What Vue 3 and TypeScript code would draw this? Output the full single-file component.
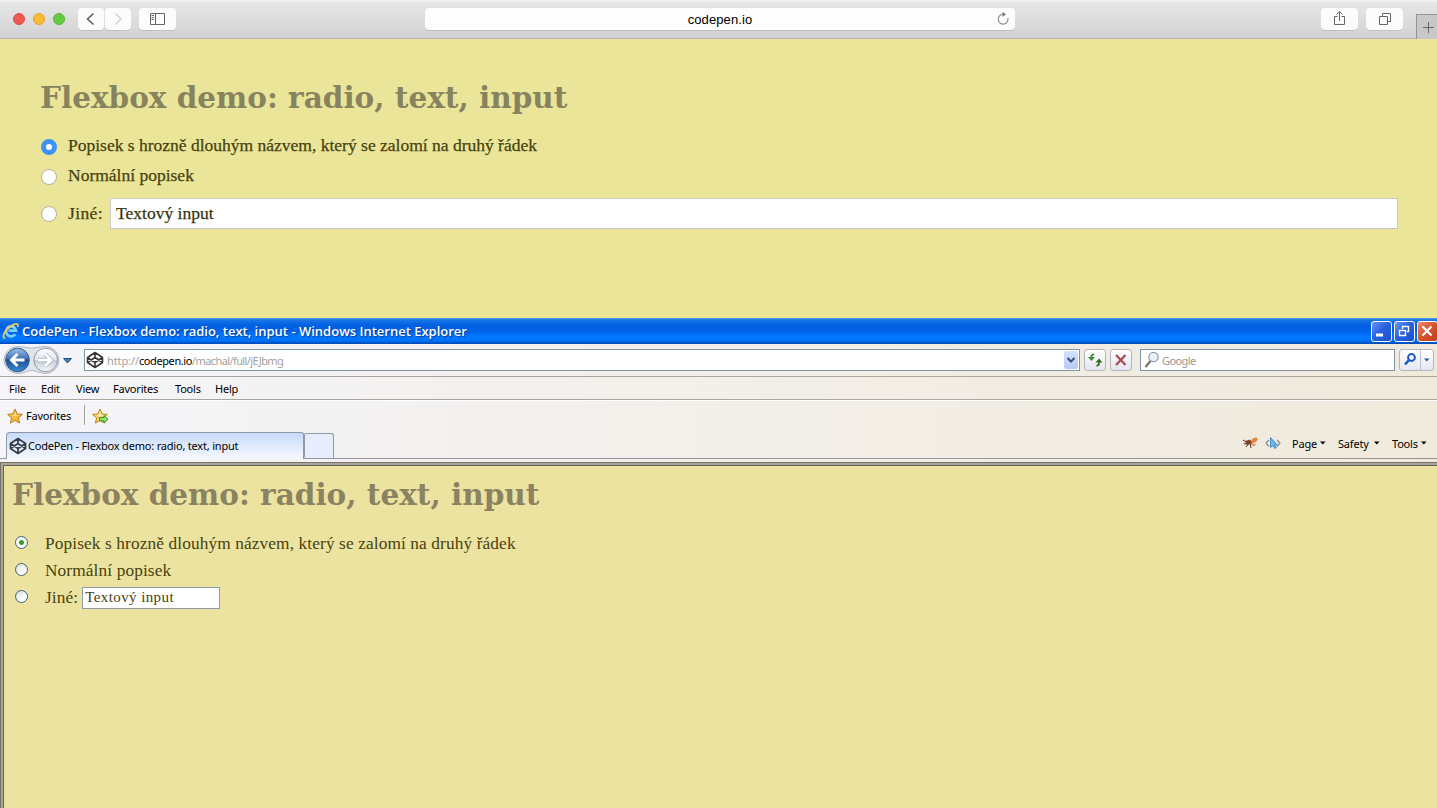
<script setup lang="ts">
import { ref } from 'vue'

interface Choice {
  id: string
  label: string
}

const title = 'Flexbox demo: radio, text, input'
const choices: Choice[] = [
  { id: 'long', label: 'Popisek s hrozně dlouhým názvem, který se zalomí na druhý řádek' },
  { id: 'normal', label: 'Normální popisek' },
  { id: 'other', label: 'Jiné:' },
]
const safariChoice = ref('long')
const ieChoice = ref('long')
const safariText = ref('Textový input')
const ieText = ref('Textový input')
const menu: string[] = ['File', 'Edit', 'View', 'Favorites', 'Tools', 'Help']
const commands: string[] = ['Page', 'Safety', 'Tools']
</script>

<template>
  <div class="screen">
    <section class="safari">
      <header class="bar">
        <i class="light red"></i><i class="light amber"></i><i class="light green"></i>
        <button class="sbtn back"><svg width="26" height="22" viewBox="0 0 26 22"><path d="M15.500 5.500 9.500 11l6 5.500" fill="none" stroke="#5b5b5b" stroke-width="1.500" /></svg></button>
        <button class="sbtn fwd"><svg width="26" height="22" viewBox="0 0 26 22"><path d="M10.500 5.500 16 11l-5.500 5.500" fill="none" stroke="#cfcfcf" stroke-width="1.400" /></svg></button>
        <button class="sbtn side"><svg width="37" height="22" viewBox="0 0 37 22"><path d="M11.500 5.500h14v11h-14zM16.500 5.500v11M12.500 7.500h2.500M12.500 9.500h2.500M12.500 11.500h2.500" fill="none" stroke="#666" /></svg></button>
        <div class="url">
          <span>codepen.io</span>
          <svg class="reload" width="14" height="16" viewBox="0 0 14 16"><path d="M6.800 4.300a4.900 4.900 0 1 0 5 3.500" fill="none" stroke="#8a8a8a" stroke-width="1.100" /><path d="M6.500 1.800v5L10 4.400z" fill="#777" /></svg>
        </div>
        <button class="sbtn share"><svg width="37" height="22" viewBox="0 0 37 22"><path d="M16.500 8.500h-3v8h10v-8h-3M18.500 13V4M15.500 6.500l3-3 3 3" fill="none" stroke="#666" /></svg></button>
        <button class="sbtn tabs"><svg width="37" height="22" viewBox="0 0 37 22"><path d="M13.500 8.500h8v8h-8zM16.500 8V5.500h8v8H22" fill="none" stroke="#666" /></svg></button>
        <button class="plus"><svg width="21" height="24" viewBox="0 0 21 24"><path d="M6 12.500h11M11.500 7v11" fill="none" stroke="#666" /></svg></button>
      </header>
      <main class="demo">
        <h1>{{ title }}</h1>
        <div v-for="c in choices" :key="c.id" class="row" :class="c.id">
          <button class="radio" :class="{ on: safariChoice === c.id }" @click="safariChoice = c.id"></button>
          <span class="label">{{ c.label }}</span>
          <input v-if="c.id === 'other'" v-model="safariText" />
        </div>
      </main>
    </section>

    <section class="ie">
      <header class="titlebar">
        <svg class="logo" width="18" height="18" viewBox="0 0 18 18">
          <path d="M13.200 12.200A5 5 0 1 1 14 8.600H6.500" fill="none" stroke="#7dcbf7" stroke-width="2.700" />
          <path d="M12.800 5.200A5 5 0 0 0 5 6.500" fill="none" stroke="#cdeeff" stroke-width="1" />
          <path d="M3.200 16.300C-1 15.500 2.600 7.800 9 3.900c4.600-2.900 8.300-2.800 6.500 1" fill="none" stroke="#f0c75e" stroke-width="1.800" />
        </svg>
        <span class="wtitle">CodePen - Flexbox demo: radio, text, input - Windows Internet Explorer</span>
        <button class="win"><svg width="19" height="19" viewBox="0 0 19 19"><path d="M4 13h7" stroke="#fff" stroke-width="3" /></svg></button>
        <button class="win"><svg width="19" height="19" viewBox="0 0 19 19"><path d="M4.500 8.500h6v5h-6zM4 8.500h7M7.500 7V4.500h6v5H12M7 4.500h7" fill="none" stroke="#fff" stroke-width="1.400" /></svg></button>
        <button class="win close"><svg width="19" height="19" viewBox="0 0 19 19"><path d="m4.500 4.500 9 9m0-9-9 9" stroke="#fff" stroke-width="2.200" /></svg></button>
      </header>

      <div class="address">
        <svg class="nav" width="76" height="32" viewBox="0 0 76 32">
          <defs>
            <linearGradient id="blue" x1="0" y1="0" x2="0" y2="1"><stop offset="0" stop-color="#9fbfe4" /><stop offset=".45" stop-color="#3d73b8" /><stop offset=".5" stop-color="#1c4d97" /><stop offset="1" stop-color="#3c8ad6" /></linearGradient>
            <linearGradient id="pale" x1="0" y1="0" x2="0" y2="1"><stop offset="0" stop-color="#fff" /><stop offset=".48" stop-color="#e3e7ee" /><stop offset=".52" stop-color="#c5ccd8" /><stop offset="1" stop-color="#f5f8fc" /></linearGradient>
          </defs>
          <path d="M17.500 2.500C24 2.500 26 4 31.500 4s8-1.500 14-1.500a13.500 13.500 0 0 1 0 27c-6 0-9-3-14-3s-7 3-14 3a13.500 13.500 0 0 1 0-27z" fill="#dfe3ea" stroke="#b4b8c0" />
          <circle cx="17.500" cy="16" r="11.800" fill="url(#blue)" stroke="#34598f" />
          <circle cx="45.700" cy="16" r="11.800" fill="url(#pale)" stroke="#8c96a6" />
          <path d="M17.500 10 11.500 16l6 6M12 16h12.500" fill="none" stroke="#fff" stroke-width="3" />
          <path d="m45 10 6 6-6 6M50.500 16H38" fill="none" stroke="#b4bcc8" stroke-width="4.400" />
          <path d="m45 10 6 6-6 6M50.500 16H38" fill="none" stroke="#fff" stroke-width="2.600" />
          <path d="M63.500 14.500h8l-4 4.500z" fill="#3d80bf" stroke="#244f80" stroke-width="1" />
        </svg>
        <div class="field">
          <svg class="pen" width="18" height="18" viewBox="0 0 18 18"><path d="M9 1.500 16.500 6.500v5L9 16.500l-7.500-5v-5zM9 1.500v5M9 11.500v5M1.500 6.500l7.500 5 7.500-5M1.500 11.500l7.500-5 7.500 5" fill="none" stroke="#383838" stroke-width="1.600" stroke-linejoin="round" /></svg>
          <span class="link"><span class="scheme">http://</span><b>codepen.io</b>/machal/full/jEJbmg</span>
          <span class="drop"><svg width="14" height="18" viewBox="0 0 14 18"><path d="m3.500 7 3.500 3.500L10.500 7" fill="none" stroke="#38507f" stroke-width="2" /></svg></span>
        </div>
        <button class="ibtn refresh"><svg width="20" height="20" viewBox="0 0 20 20"><path d="M9 4 6.500 5.500V8" fill="none" stroke="#3f8a31" stroke-width="1.800" /><path d="M3 7h7L6.500 11z" fill="#3f8a31" /><path d="M11.500 16l2.500-1.500V12" fill="none" stroke="#336c25" stroke-width="1.800" /><path d="M10.500 12.500h7L14 8.500z" fill="#336c25" /></svg></button>
        <button class="ibtn stop"><svg width="20" height="20" viewBox="0 0 20 20"><path d="m5 5 9.500 10M14.500 5 5 15" stroke="#a94850" stroke-width="2.200" /></svg></button>
        <div class="search">
          <svg width="18" height="20" viewBox="0 0 18 20"><path d="m7.500 11-5 6" stroke="#777" stroke-width="2.400" /><circle cx="10.500" cy="7" r="4.700" fill="#e7f3fb" stroke="#93999f" stroke-width="1.200" /></svg>
          <span>Google</span>
        </div>
        <button class="find">
          <svg width="33" height="20" viewBox="0 0 33 20"><path d="M20.500 0v20" stroke="#b9bfcb" /><circle cx="11.500" cy="7.500" r="3.400" fill="#fff" stroke="#1e58bf" stroke-width="2" /><path d="m9 10-4 4.500" stroke="#1e58bf" stroke-width="2.600" /><path d="M24 8.500h5.500l-2.700 3z" fill="#2560a8" /></svg>
        </button>
      </div>

      <nav class="menu"><span v-for="m in menu" :key="m" :class="m.toLowerCase()">{{ m }}</span></nav>

      <div class="favs">
        <svg width="16" height="16" viewBox="0 0 16 16"><path d="m8 1 2.100 4.900 5.300.5-4 3.500 1.200 5.200L8 12.400l-4.600 2.700 1.200-5.200-4-3.500 5.300-.5z" fill="#f7b93b" stroke="#bd7b1b" /><path d="m8 3.500 1.200 3.200 3 .5-3.700 1.200-4-1.200 2.500-.5z" fill="#ffe08a" /></svg>
        <span>Favorites</span>
        <i></i>
        <svg width="18" height="17" viewBox="0 0 18 17"><path d="m8 1 2.100 4.900 5.300.5-4 3.500 1.200 5.200L8 12.400l-4.600 2.700 1.200-5.200-4-3.500 5.300-.5z" fill="#f9cf6e" stroke="#bd841b" /><path d="m8 3.500 1.200 3.200 3 .5-3.700 1.200-4-1.200 2.500-.5z" fill="#fff0b5" /><path d="M7.500 9.500h4.500v-2l4 3.800-4 3.700v-2H7.500z" fill="#8ce35e" stroke="#3c9420" /></svg>
      </div>

      <div class="tabrow">
        <div class="tab">
          <svg class="pen" width="18" height="18" viewBox="0 0 18 18"><path d="M9 1.500 16.500 6.500v5L9 16.500l-7.500-5v-5zM9 1.500v5M9 11.500v5M1.500 6.500l7.500 5 7.500-5M1.500 11.500l7.500-5 7.500 5" fill="none" stroke="#383c48" stroke-width="1.700" stroke-linejoin="round" /></svg>
          <span>CodePen - {{ title }}</span>
        </div>
        <div class="newtab"></div>
        <div class="commands">
          <svg width="16" height="14" viewBox="0 0 16 14"><path d="m1 4 5 3-4 1M4 11l3-4M9 12l-1-5M12 10 9 7" fill="none" stroke="#4b3026" /><path d="M8 6.500C9 3 13 .5 15 2s-1 5-6 5.500z" fill="#e08a3c" /><path d="m3 5 5-1.500L10 7l-5 2.500z" fill="#864124" /><path d="M9 7.500 14 8l-1 2-4-1z" fill="#d9a168" /></svg>
          <svg class="dev" width="16" height="14" viewBox="0 0 16 14"><path d="M4 4 1 7l3 3.500M12 4l3 3-3 3.500" fill="none" stroke="#888" stroke-width="1.200" /><path d="M5.500 1.500v10L8 9.500l1.700 3 1.600-1-1.600-2.700h2.500z" fill="#66baf3" stroke="#287dbd" stroke-width=".8" /></svg>
          <span v-for="c in commands" :key="c" class="cmd" :class="'cmd-' + c.toLowerCase()">{{ c }}<svg width="6" height="4" viewBox="0 0 6 4"><path d="M0 .5h5.500L2.800 3.500z" /></svg></span>
        </div>
      </div>

      <main class="page">
        <h1>{{ title }}</h1>
        <div v-for="c in choices" :key="c.id" class="row" :class="c.id">
          <button class="radio" :class="{ on: ieChoice === c.id }" @click="ieChoice = c.id"></button>
          <span class="label">{{ c.label }}</span>
          <input v-if="c.id === 'other'" v-model="ieText" />
        </div>
      </main>
    </section>
  </div>
</template>

<style>
body { margin: 0; overflow: hidden; background: #ede3a0; }
</style>

<style scoped>
* { box-sizing: border-box; }
button, input { font: inherit; padding: 0; margin: 0; }
svg { display: block; flex: none; }
.screen { width: 1437px; height: 808px; display: flex; flex-direction: column; overflow: hidden; font-family: "Noto Sans", sans-serif; }
.safari { height: 318px; background: #ebe59a; }
.bar { height: 39px; display: flex; align-items: flex-start; padding: 8px 0 0 13px; background: linear-gradient(#f3f3f3, #e7e6e7 8%, #d3d2d3); border-bottom: 1px solid #b8b2b4; }
.light { width: 12px; height: 12px; border-radius: 50%; margin: 5px 8px 0 0; flex: none; }
.red { background: #ee5850; border: 1px solid #da4b44; }
.amber { background: #f8bb32; border: 1px solid #dfa32e; }
.green { background: #66cb42; border: 1px solid #56b236; }
.sbtn { height: 22px; border: 0; border-radius: 4px; background: #fcfcfc; box-shadow: 0 1px 0 #bfbfbf; flex: none; }
.back { width: 26px; margin-left: 5px; }
.fwd { width: 26px; margin-left: 1px; }
.side { width: 37px; margin-left: 8px; }
.url { position: relative; width: 590px; height: 22px; margin-left: 249px; border-radius: 4px; background: #fdfdfd; box-shadow: 0 1px 0 #bdbdbd; font: 13px/23px "Liberation Sans", sans-serif; color: #000; text-align: center; flex: none; letter-spacing: .1px; }
.reload { position: absolute; right: 5px; top: 2px; }
.share { width: 37px; margin-left: 306px; }
.tabs { width: 37px; margin-left: 8px; }
.plus { width: 21px; height: 25px; margin: 6px 0 0 13px; border: 1px solid #959595; border-width: 1px 0 0 1px; background: #c9c8c9; flex: none; }
h1 { margin: 0; font: bold 29.5px/40px "DejaVu Serif", serif; color: #87835e; white-space: nowrap; }
.row { display: flex; align-items: center; color: #47420e; font-family: "Liberation Serif", serif; white-space: nowrap; }
.demo { padding: 39px 39px 0 40px; }
.demo .row { height: 30px; font-size: 17.5px; -webkit-text-stroke: .25px #47420e; }
.demo h1 { margin-bottom: 13px; }
.demo .label { margin-top: -2px; }
.demo .other { height: 45px; }
.demo .other .label { margin-top: 0; letter-spacing: .4px; }
.demo .radio { width: 16px; height: 16px; margin: 1px 11px 0 1px; border: 1px solid #b3b09a; border-radius: 50%; background: #fff; flex: none; }
.demo .on { border: 5px solid #3b93fb; }
.demo input { flex: 1; height: 31px; margin-left: 7px; padding: 0 5px; border: 1px solid #c8c8c8; background: #fff; color: #333010; outline: 0; }

.ie { flex: 1; display: flex; flex-direction: column; background: linear-gradient(90deg, #f5f5fa, #f2eee6 60%, #f0eadc); font-size: 11px; color: #000; letter-spacing: -.2px; }
.titlebar { height: 26px; display: flex; align-items: center; padding-left: 2px; background: linear-gradient(#56a0f5, #1a77ea 7%, #0060df 28%, #0063e9 50%, #0078fe 72%, #0073f8 87%, #0046b4); flex: none; }
.wtitle { flex: 1; margin-left: 2px; color: #fff; font: 600 13px/24px "Open Sans", sans-serif; text-shadow: 1px 1px 1px #0a3a9a; white-space: nowrap; letter-spacing: 0; }
.win { width: 21px; height: 21px; margin-right: 2px; border: 1px solid #fff; border-radius: 3px; background: linear-gradient(135deg, #6d98f0, #2a62e2 45%, #1b50cc); flex: none; }
.close { margin-right: -1px; background: linear-gradient(135deg, #eb8a6c, #d9532e 50%, #b83c1c); }
.address { height: 33px; display: flex; align-items: center; border-bottom: 1px solid #aaa59d; flex: none; }
.nav { margin-top: -1px; }
.field { width: 996px; height: 22px; display: flex; align-items: center; margin-left: 8px; border: 1px solid #8094a8; background: #fff; flex: none; }
.field .pen { margin-left: 1px; }
.link { flex: 1; margin-left: 3px; color: #a39f9b; white-space: nowrap; letter-spacing: -.6px; }
.link .scheme { letter-spacing: -.1px; }
.link b { font-weight: 400; color: #000; letter-spacing: -.4px; }
.drop { margin-right: 1px; border-radius: 2px; background: linear-gradient(#d5e2fc, #b5c9f3); }
.ibtn { width: 22px; height: 22px; border: 1px solid #b5b6bd; border-radius: 3px; background: linear-gradient(#fff, #e4e6f0); flex: none; }
.refresh { margin-left: 4px; }
.stop { margin-left: 4px; }
.search { width: 255px; height: 22px; display: flex; align-items: center; margin-left: 8px; padding-left: 2px; border: 1px solid #8094a8; background: #fff; color: #9b9792; letter-spacing: -.6px; flex: none; }
.search span { margin-left: 1px; }
.find { width: 35px; height: 22px; margin-left: 4px; border: 1px solid #b5b6bd; border-radius: 3px; background: linear-gradient(#fff, #e6e8f1); flex: none; }
.menu { height: 23px; display: flex; align-items: center; padding: 1px 0 0 9px; border-bottom: 1px solid #aaa59f; box-shadow: 0 1px 0 #fff; flex: none; }
.menu .file { width: 32px; }
.menu .edit { width: 35px; }
.menu .view { width: 37px; }
.menu .favorites { width: 62px; }
.menu .tools { width: 40px; }
.menu .help { width: 30px; }
.favs { height: 32px; display: flex; align-items: center; padding-left: 7px; flex: none; }
.favs span { width: 57px; margin: -2px 0 0 3px; }
.favs i { width: 1px; height: 20px; margin: -2px 7px 0 1px; background: #a5a29e; }
.tabrow { height: 27px; display: flex; align-items: flex-end; padding-left: 6px; border-bottom: 1px solid #96969e; flex: none; }
.tab { width: 298px; height: 27px; display: flex; align-items: center; margin-bottom: -1px; padding-left: 2px; border: 1px solid #8f98a8; border-bottom: 0; border-radius: 4px 3px 0 0; background: linear-gradient(#c6dbfb, #dfeafc 50%, #f6f8fd); white-space: nowrap; }
.tab span { margin: -2px 0 0 1px; }
.newtab { width: 30px; height: 25px; border: 1px solid #9299a9; border-bottom: 0; border-radius: 2px 3px 0 2px; background: #e7edfc; }
.commands { flex: 1; height: 29px; display: flex; justify-content: flex-end; align-items: center; padding: 0 10px 1px 0; }
.dev { margin: 0 11px 0 7px; }
.cmd { display: flex; align-items: center; justify-content: space-between; }
.cmd-page { width: 34px; }
.cmd-safety { width: 42px; margin: 0 12px; }
.cmd-tools { width: 35px; }
.page { flex: 1; border: solid #77736b; border-width: 1px 0 0 1px; box-shadow: inset 2px 2px 0 #aaa49a, inset 3px 3px 0 #66625b; margin-top: 3px; padding: 12px 0 0 11px; background: #ede3a0; letter-spacing: 0; }
.page h1 { margin-bottom: 15px; color: #8a8260; }
.page .row { height: 27px; font-size: 17.3px; letter-spacing: .12px; }
.page .radio { width: 13px; height: 13px; margin: -3px 17px 0 3px; border: 1px solid #426079; border-radius: 50%; background: linear-gradient(135deg, #d9d9d3, #fff 70%); flex: none; }
.page .on { background: radial-gradient(circle, #35a026 0 2px, #fff 3px); }
.page input { width: 138px; height: 22px; margin-left: 4px; padding: 0 2px; border: 1px solid #8c9ba6; background: #fff; color: #47420e; font-size: 15px; letter-spacing: .4px; outline: 0; }
</style>
